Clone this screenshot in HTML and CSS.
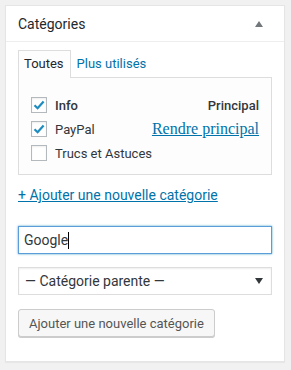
FILE: index.html
```html
<!DOCTYPE html>
<html lang="fr">
<head>
  <meta charset="UTF-8">
  <meta name="viewport" content="width=device-width, initial-scale=1.0">
  <title>Catégories</title>
  <link rel="stylesheet" href="styles.css">
</head>
<body>
  <div class="postbox">
    <!-- Box header -->
    <div class="postbox-header">
      <h2>Catégories</h2>
      <svg class="toggle" width="8" height="6" viewBox="0 0 8 6"><path d="M4 0 L8 6 L0 6 Z" fill="#72777c"/></svg>
    </div>

    <div class="inside">
      <!-- Tabs -->
      <ul class="tabs">
        <li class="tab active">Toutes</li>
        <li class="tab"><a href="#">Plus utilisés</a></li>
      </ul>

      <div class="tabs-panel">
        <ul class="checklist">
          <li class="term primary">
            <span class="check checked">
              <svg width="14" height="14" viewBox="0 0 14 14"><path d="M2.5 7.2 L5.6 10.2 L11.6 3.4" fill="none" stroke="#1e8cbe" stroke-width="2.2"/></svg>
            </span>
            <span class="term-name">Info</span>
            <span class="term-primary">Principal</span>
          </li>
          <li class="term">
            <span class="check checked">
              <svg width="14" height="14" viewBox="0 0 14 14"><path d="M2.5 7.2 L5.6 10.2 L11.6 3.4" fill="none" stroke="#1e8cbe" stroke-width="2.2"/></svg>
            </span>
            <span class="term-name">PayPal</span>
            <a href="#" class="make-primary">Rendre principal</a>
          </li>
          <li class="term">
            <span class="check"></span>
            <span class="term-name">Trucs et Astuces</span>
          </li>
        </ul>
      </div>

      <p class="add-toggle"><a href="#">+ Ajouter une nouvelle catégorie</a></p>

      <!-- Add new category form -->
      <div class="add-form">
        <div class="text-field">Google<span class="caret"></span></div>
        <div class="select-field">
          <span>— Catégorie parente —</span>
          <svg width="8" height="6" viewBox="0 0 8 6"><path d="M0 0 L8 0 L4 6 Z" fill="#32373c"/></svg>
        </div>
        <div><button class="button">Ajouter une nouvelle catégorie</button></div>
      </div>
    </div>
  </div>
</body>
</html>
```

FILE: styles.css
```css
/* General */
* {
  margin: 0;
  padding: 0;
  box-sizing: border-box;
}

body {
  font-family: Roboto, Arial, sans-serif;
  font-size: 13px;
  color: #32373c;
  background-color: #f1f1f1;
  padding: 5px;
}

a {
  color: #0073aa;
}

/* Box */
.postbox {
  width: 280px;
  background-color: #fff;
  border: 1px solid #e5e5e5;
  box-shadow: 0 1px 1px rgba(0, 0, 0, 0.04);
  padding-bottom: 24px;
}

.postbox-header {
  height: 36px;
  display: flex;
  align-items: center;
  justify-content: space-between;
  padding: 0 21px 0 12px;
  border-bottom: 1px solid #eee;
}

.postbox-header h2 {
  font-size: 14px;
  font-weight: 400;
  color: #23282d;
}

.inside {
  padding: 8px 12px 0;
}

/* Tabs */
.tabs {
  list-style: none;
  display: flex;
  margin-bottom: -1px;
}

.tab {
  height: 28px;
  line-height: 26px;
  padding: 0 5px;
  border: 1px solid transparent;
  border-bottom: none;
  color: #23282d;
}

.tab.active {
  padding: 0 6px 0 5px;
  background-color: #fdfdfd;
  border-color: #ddd;
}

.tab a {
  text-decoration: none;
}

.tabs-panel {
  background-color: #fdfdfd;
  border: 1px solid #ddd;
  padding: 15px 12px 9px;
}

.checklist {
  list-style: none;
}

.term {
  display: flex;
  align-items: center;
  height: 24px;
  color: #32373c;
}

.check {
  width: 16px;
  height: 16px;
  border: 1px solid #b4b9be;
  background-color: #fff;
  box-shadow: inset 0 1px 2px rgba(0, 0, 0, 0.07);
  margin-right: 8px;
  display: flex;
  align-items: center;
  justify-content: center;
}

.term.primary .term-name {
  font-weight: 500;
}

.term-primary {
  margin-left: auto;
  font-weight: 500;
  color: #32373c;
}

.make-primary {
  margin-left: auto;
  font-family: "Liberation Serif", "Times New Roman", serif;
  font-size: 16px;
}

.add-toggle {
  margin-top: 10px;
  line-height: 20px;
  font-size: 14px;
}

/* Add form */
.add-form {
  margin-top: 21px;
}

.text-field {
  height: 28px;
  border: 1px solid #5b9dd9;
  box-shadow: 0 0 2px rgba(30, 140, 190, 0.8);
  padding: 0 5px;
  display: flex;
  align-items: center;
  font-size: 14px;
  color: #32373c;
}

.caret {
  display: inline-block;
  width: 1px;
  height: 17px;
  background-color: #000;
}

.select-field {
  height: 28px;
  margin-top: 13px;
  border: 1px solid #ddd;
  box-shadow: inset 0 1px 2px rgba(0, 0, 0, 0.07);
  padding: 0 8px 0 6px;
  display: flex;
  align-items: center;
  justify-content: space-between;
  font-size: 14px;
}

.button {
  margin-top: 14px;
  height: 28px;
  padding: 0 10px;
  font-family: inherit;
  font-size: 13px;
  color: #555;
  background-color: #f7f7f7;
  border: 1px solid #ccc;
  border-radius: 3px;
  box-shadow: 0 1px 0 #ccc;
  cursor: pointer;
}
```
